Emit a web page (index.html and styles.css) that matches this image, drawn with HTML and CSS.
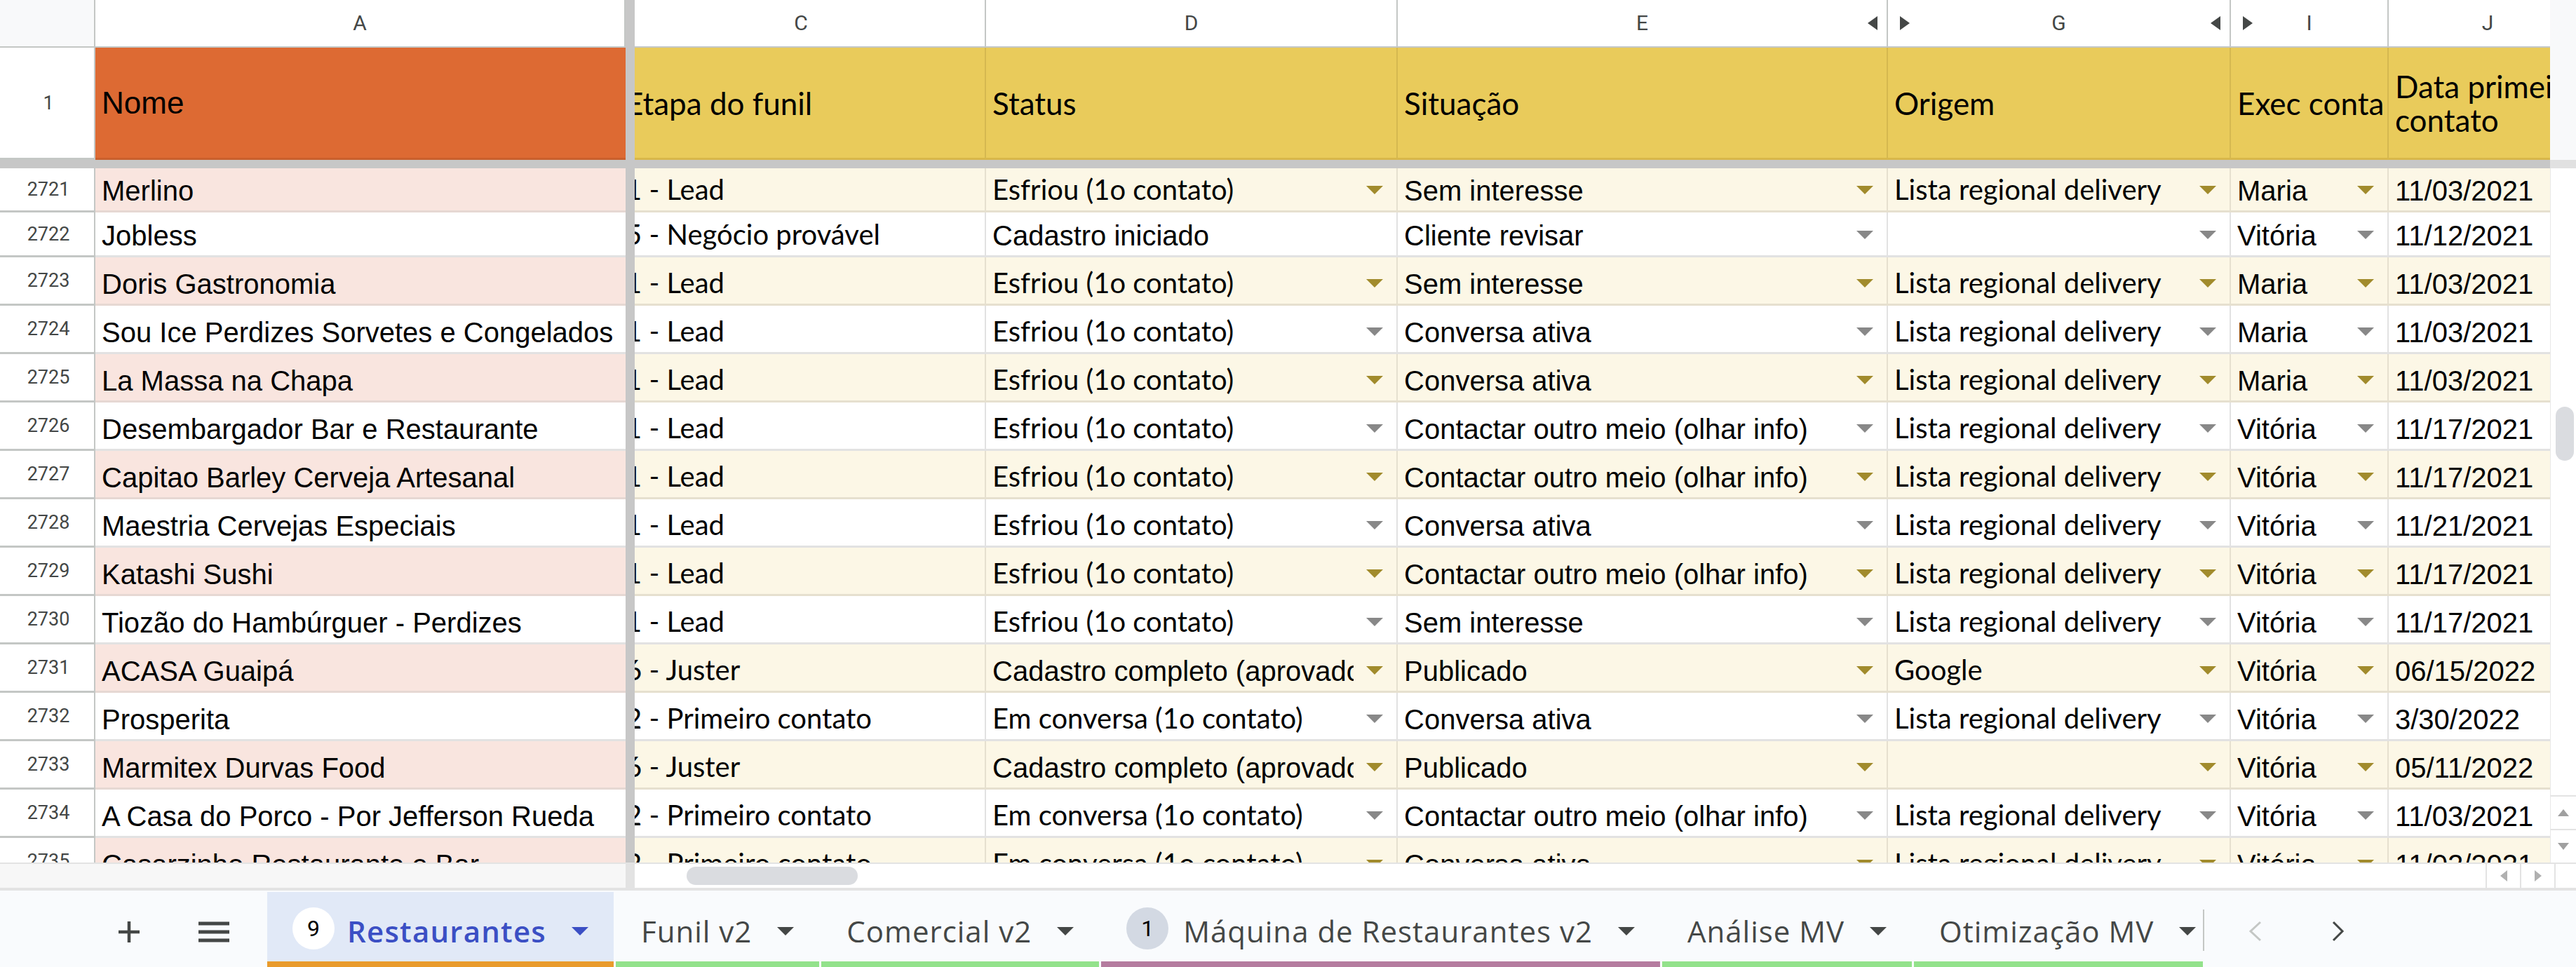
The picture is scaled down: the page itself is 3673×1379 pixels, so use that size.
FILE: index.html
```html
<!DOCTYPE html>
<html lang="pt">
<head>
<meta charset="utf-8">
<title>Restaurantes</title>
<link rel="stylesheet" href="styles.css">
</head>
<body>
<div class="app">
  <div class="main">
    <div class="table">
      <div class="grid">
        <div class="corner"></div>
        <div class="ch">A</div>
        <div class="fz"></div>
        <div class="ch cc-l"><span>C</span></div>
        <div class="ch">D</div>
        <div class="ch">E<i class="hl"></i></div>
        <div class="ch"><i class="hr"></i>G<i class="hl"></i></div>
        <div class="ch"><i class="hr"></i>I</div>
        <div class="ch">J</div>

        <div class="rn">1</div>
        <div class="hd or">Nome</div>
        <div class="fz"></div>
        <div class="hd ye cc"><span class="t">Etapa do funil</span></div>
        <div class="hd ye">Status</div>
        <div class="hd ye">Situação</div>
        <div class="hd ye">Origem</div>
        <div class="hd ye">Exec conta</div>
        <div class="hd ye wrap">Data primeiro contato</div>

        <div class="fzh"></div>

        <div class="row odd">
          <div class="rn">2721</div>
          <div class="c a"><span class="t">Merlino</span></div>
          <div class="fz"></div>
          <div class="c cc"><span class="t l">1 - Lead</span></div>
          <div class="c"><span class="t l">Esfriou (1o contato)</span><i class="dd"></i></div>
          <div class="c"><span class="t">Sem interesse</span><i class="dd"></i></div>
          <div class="c"><span class="t l">Lista regional delivery</span><i class="dd"></i></div>
          <div class="c"><span class="t">Maria</span><i class="dd"></i></div>
          <div class="c"><span class="t">11/03/2021</span></div>
        </div>
        <div class="row even">
          <div class="rn">2722</div>
          <div class="c a"><span class="t">Jobless</span></div>
          <div class="fz"></div>
          <div class="c cc"><span class="t l">5 - Negócio provável</span></div>
          <div class="c"><span class="t">Cadastro iniciado</span></div>
          <div class="c"><span class="t">Cliente revisar</span><i class="dd"></i></div>
          <div class="c"><span class="t l"></span><i class="dd"></i></div>
          <div class="c"><span class="t">Vitória</span><i class="dd"></i></div>
          <div class="c"><span class="t">11/12/2021</span></div>
        </div>
        <div class="row odd">
          <div class="rn">2723</div>
          <div class="c a"><span class="t">Doris Gastronomia</span></div>
          <div class="fz"></div>
          <div class="c cc"><span class="t l">1 - Lead</span></div>
          <div class="c"><span class="t l">Esfriou (1o contato)</span><i class="dd"></i></div>
          <div class="c"><span class="t">Sem interesse</span><i class="dd"></i></div>
          <div class="c"><span class="t l">Lista regional delivery</span><i class="dd"></i></div>
          <div class="c"><span class="t">Maria</span><i class="dd"></i></div>
          <div class="c"><span class="t">11/03/2021</span></div>
        </div>
        <div class="row even">
          <div class="rn">2724</div>
          <div class="c a"><span class="t">Sou Ice Perdizes Sorvetes e Congelados</span></div>
          <div class="fz"></div>
          <div class="c cc"><span class="t l">1 - Lead</span></div>
          <div class="c"><span class="t l">Esfriou (1o contato)</span><i class="dd"></i></div>
          <div class="c"><span class="t">Conversa ativa</span><i class="dd"></i></div>
          <div class="c"><span class="t l">Lista regional delivery</span><i class="dd"></i></div>
          <div class="c"><span class="t">Maria</span><i class="dd"></i></div>
          <div class="c"><span class="t">11/03/2021</span></div>
        </div>
        <div class="row odd">
          <div class="rn">2725</div>
          <div class="c a"><span class="t">La Massa na Chapa</span></div>
          <div class="fz"></div>
          <div class="c cc"><span class="t l">1 - Lead</span></div>
          <div class="c"><span class="t l">Esfriou (1o contato)</span><i class="dd"></i></div>
          <div class="c"><span class="t">Conversa ativa</span><i class="dd"></i></div>
          <div class="c"><span class="t l">Lista regional delivery</span><i class="dd"></i></div>
          <div class="c"><span class="t">Maria</span><i class="dd"></i></div>
          <div class="c"><span class="t">11/03/2021</span></div>
        </div>
        <div class="row even">
          <div class="rn">2726</div>
          <div class="c a"><span class="t">Desembargador Bar e Restaurante</span></div>
          <div class="fz"></div>
          <div class="c cc"><span class="t l">1 - Lead</span></div>
          <div class="c"><span class="t l">Esfriou (1o contato)</span><i class="dd"></i></div>
          <div class="c"><span class="t">Contactar outro meio (olhar info)</span><i class="dd"></i></div>
          <div class="c"><span class="t l">Lista regional delivery</span><i class="dd"></i></div>
          <div class="c"><span class="t">Vitória</span><i class="dd"></i></div>
          <div class="c"><span class="t">11/17/2021</span></div>
        </div>
        <div class="row odd">
          <div class="rn">2727</div>
          <div class="c a"><span class="t">Capitao Barley Cerveja Artesanal</span></div>
          <div class="fz"></div>
          <div class="c cc"><span class="t l">1 - Lead</span></div>
          <div class="c"><span class="t l">Esfriou (1o contato)</span><i class="dd"></i></div>
          <div class="c"><span class="t">Contactar outro meio (olhar info)</span><i class="dd"></i></div>
          <div class="c"><span class="t l">Lista regional delivery</span><i class="dd"></i></div>
          <div class="c"><span class="t">Vitória</span><i class="dd"></i></div>
          <div class="c"><span class="t">11/17/2021</span></div>
        </div>
        <div class="row even">
          <div class="rn">2728</div>
          <div class="c a"><span class="t">Maestria Cervejas Especiais</span></div>
          <div class="fz"></div>
          <div class="c cc"><span class="t l">1 - Lead</span></div>
          <div class="c"><span class="t l">Esfriou (1o contato)</span><i class="dd"></i></div>
          <div class="c"><span class="t">Conversa ativa</span><i class="dd"></i></div>
          <div class="c"><span class="t l">Lista regional delivery</span><i class="dd"></i></div>
          <div class="c"><span class="t">Vitória</span><i class="dd"></i></div>
          <div class="c"><span class="t">11/21/2021</span></div>
        </div>
        <div class="row odd">
          <div class="rn">2729</div>
          <div class="c a"><span class="t">Katashi Sushi</span></div>
          <div class="fz"></div>
          <div class="c cc"><span class="t l">1 - Lead</span></div>
          <div class="c"><span class="t l">Esfriou (1o contato)</span><i class="dd"></i></div>
          <div class="c"><span class="t">Contactar outro meio (olhar info)</span><i class="dd"></i></div>
          <div class="c"><span class="t l">Lista regional delivery</span><i class="dd"></i></div>
          <div class="c"><span class="t">Vitória</span><i class="dd"></i></div>
          <div class="c"><span class="t">11/17/2021</span></div>
        </div>
        <div class="row even">
          <div class="rn">2730</div>
          <div class="c a"><span class="t">Tiozão do Hambúrguer - Perdizes</span></div>
          <div class="fz"></div>
          <div class="c cc"><span class="t l">1 - Lead</span></div>
          <div class="c"><span class="t l">Esfriou (1o contato)</span><i class="dd"></i></div>
          <div class="c"><span class="t">Sem interesse</span><i class="dd"></i></div>
          <div class="c"><span class="t l">Lista regional delivery</span><i class="dd"></i></div>
          <div class="c"><span class="t">Vitória</span><i class="dd"></i></div>
          <div class="c"><span class="t">11/17/2021</span></div>
        </div>
        <div class="row odd">
          <div class="rn">2731</div>
          <div class="c a"><span class="t">ACASA Guaipá</span></div>
          <div class="fz"></div>
          <div class="c cc"><span class="t l">6 - Juster</span></div>
          <div class="c"><span class="t">Cadastro completo (aprovado)</span><i class="dd"></i></div>
          <div class="c"><span class="t">Publicado</span><i class="dd"></i></div>
          <div class="c"><span class="t l">Google</span><i class="dd"></i></div>
          <div class="c"><span class="t">Vitória</span><i class="dd"></i></div>
          <div class="c"><span class="t">06/15/2022</span></div>
        </div>
        <div class="row even">
          <div class="rn">2732</div>
          <div class="c a"><span class="t">Prosperita</span></div>
          <div class="fz"></div>
          <div class="c cc"><span class="t l">2 - Primeiro contato</span></div>
          <div class="c"><span class="t l">Em conversa (1o contato)</span><i class="dd"></i></div>
          <div class="c"><span class="t">Conversa ativa</span><i class="dd"></i></div>
          <div class="c"><span class="t l">Lista regional delivery</span><i class="dd"></i></div>
          <div class="c"><span class="t">Vitória</span><i class="dd"></i></div>
          <div class="c"><span class="t">3/30/2022</span></div>
        </div>
        <div class="row odd">
          <div class="rn">2733</div>
          <div class="c a"><span class="t">Marmitex Durvas Food</span></div>
          <div class="fz"></div>
          <div class="c cc"><span class="t l">6 - Juster</span></div>
          <div class="c"><span class="t">Cadastro completo (aprovado)</span><i class="dd"></i></div>
          <div class="c"><span class="t">Publicado</span><i class="dd"></i></div>
          <div class="c"><span class="t l"></span><i class="dd"></i></div>
          <div class="c"><span class="t">Vitória</span><i class="dd"></i></div>
          <div class="c"><span class="t">05/11/2022</span></div>
        </div>
        <div class="row even">
          <div class="rn">2734</div>
          <div class="c a"><span class="t">A Casa do Porco - Por Jefferson Rueda</span></div>
          <div class="fz"></div>
          <div class="c cc"><span class="t l">2 - Primeiro contato</span></div>
          <div class="c"><span class="t l">Em conversa (1o contato)</span><i class="dd"></i></div>
          <div class="c"><span class="t">Contactar outro meio (olhar info)</span><i class="dd"></i></div>
          <div class="c"><span class="t l">Lista regional delivery</span><i class="dd"></i></div>
          <div class="c"><span class="t">Vitória</span><i class="dd"></i></div>
          <div class="c"><span class="t">11/03/2021</span></div>
        </div>
        <div class="row odd">
          <div class="rn">2735</div>
          <div class="c a"><span class="t">Casarzinho Restaurante e Bar</span></div>
          <div class="fz"></div>
          <div class="c cc"><span class="t l">2 - Primeiro contato</span></div>
          <div class="c"><span class="t l">Em conversa (1o contato)</span><i class="dd"></i></div>
          <div class="c"><span class="t">Conversa ativa</span><i class="dd"></i></div>
          <div class="c"><span class="t l">Lista regional delivery</span><i class="dd"></i></div>
          <div class="c"><span class="t">Vitória</span><i class="dd"></i></div>
          <div class="c"><span class="t">11/02/2021</span></div>
        </div>
      </div>
    </div>
    <div class="vscroll">
      <div class="vs-top"></div>
      <div class="vs-fz"></div>
      <div class="vs-track"><div class="vs-thumb"></div></div>
      <div class="vs-btn"><i class="up"></i></div>
      <div class="vs-btn"><i class="down"></i></div>
    </div>
  </div>

  <div class="hscroll">
    <div class="hs-frozen"></div>
    <div class="hs-div"></div>
    <div class="hs-track"><div class="hs-thumb"></div></div>
    <div class="hs-btn"><i class="left"></i></div>
    <div class="hs-btn"><i class="right"></i></div>
    <div class="hs-corner"></div>
  </div>

  <div class="tabbar">
    <div class="tb-left">
      <svg class="ico-plus" width="32" height="32" viewBox="0 0 32 32"><path d="M16 1v30M1 16h30" stroke="#444746" stroke-width="4.5" fill="none"/></svg>
      <svg class="ico-menu" width="44" height="30" viewBox="0 0 44 30"><path d="M0 3h44M0 15h44M0 27h44" stroke="#444746" stroke-width="5" fill="none"/></svg>
    </div>
    <div class="tabs">
      <div class="tab on bar-orange"><span class="badge">9</span><span class="tname">Restaurantes</span><i class="tarr"></i></div>
      <div class="tab bar-green"><span class="tname">Funil v2</span><i class="tarr"></i></div>
      <div class="tab bar-green"><span class="tname">Comercial v2</span><i class="tarr"></i></div>
      <div class="tab bar-purple"><span class="badge gray">1</span><span class="tname">Máquina de Restaurantes v2</span><i class="tarr"></i></div>
      <div class="tab bar-green"><span class="tname">Análise MV</span><i class="tarr"></i></div>
      <div class="tab bar-green"><span class="tname">Otimização MV</span><i class="tarr"></i></div>
    </div>
    <div class="tb-sep"></div>
    <div class="tb-nav">
      <svg class="nav-prev" width="22" height="30" viewBox="0 0 22 30"><path d="M19 2 L5 15 L19 28" stroke="#c4c7c5" stroke-width="3" fill="none"/></svg>
      <svg class="nav-next" width="18" height="30" viewBox="0 0 18 30"><path d="M2 2 L15 15 L2 28" stroke="#444746" stroke-width="3" fill="none"/></svg>
    </div>
  </div>
</div>
</body>
</html>
```

FILE: styles.css
```css
* { box-sizing: border-box; margin: 0; padding: 0; }

html, body {
  width: 3673px;
  height: 1379px;
  overflow: hidden;
  background: #ffffff;
  font-family: "Liberation Sans", Arial, sans-serif;
  color: #000;
}

.app { display: flex; flex-direction: column; width: 3673px; height: 1379px; }

.main { display: flex; height: 1230px; }

.table { width: 3636px; height: 1230px; overflow: hidden; flex: none; }

.grid {
  display: grid;
  grid-template-columns: 136px 756px 13px 501px 587px 699px 489px 225px 284px;
  grid-template-rows: 68px 160px 12px 63px 64px repeat(13, 69px);
  width: 3690px;
}

.row { display: contents; }

.corner {
  background: #f8f9fa;
  border-right: 2px solid #c4c7c5;
  border-bottom: 2px solid #c4c7c5;
}
.ch {
  position: relative;
  display: flex;
  align-items: center;
  justify-content: center;
  background: #fff;
  border-right: 2px solid #c4c7c5;
  border-bottom: 2px solid #c4c7c5;
  font-family: Roboto, "Liberation Sans", sans-serif;
  font-size: 30px;
  color: #444746;
  padding-bottom: 2px;
}
.cc-l span { margin-right: 25px; }
.hl {
  position: absolute;
  right: 13px;
  top: 23px;
  width: 0; height: 0;
  border-top: 10px solid transparent;
  border-bottom: 10px solid transparent;
  border-right: 14px solid #444746;
}
.hr {
  position: absolute;
  left: 17px;
  top: 23px;
  width: 0; height: 0;
  border-top: 10px solid transparent;
  border-bottom: 10px solid transparent;
  border-left: 14px solid #444746;
}

.fz { background: #c7c7c7; }
.fzh { grid-column: 1 / -1; background: #c7c7c7; }

.rn {
  display: flex;
  align-items: center;
  justify-content: center;
  background: #fff;
  border-right: 2px solid #c4c7c5;
  border-bottom: 3px solid #c4c7c5;
  font-family: Roboto, "Liberation Sans", sans-serif;
  font-size: 27px;
  color: #444746;
  padding-left: 4px;
}

.hd {
  display: flex;
  align-items: center;
  padding-left: 9px;
  font-size: 44px;
  line-height: 48px;
  white-space: nowrap;
  overflow: hidden;
  border-bottom: 3px solid;
}
.hd.or {
  background: #dd6a33;
  border-bottom-color: #c9602d;
  font-family: "Liberation Sans", Arial, sans-serif;
}
.hd.ye {
  background: #e9cb5b;
  border-bottom-color: #d8b74b;
  border-right: 2px solid #d5b850;
  font-family: Lato, "Liberation Sans", sans-serif;
}
.hd.wrap { white-space: normal; }
.hd.cc { padding-left: 0; }
.hd.cc .t { margin-left: -13px; }

.c {
  display: flex;
  align-items: flex-end;
  overflow: hidden;
  white-space: nowrap;
  padding: 0 0 5px 9px;
  font-size: 40px;
  line-height: 46px;
  border-right: 2px solid #e2e2e2;
  border-bottom: 3px solid #e2e2e2;
  background: #fff;
}
.c .t { flex: 1 1 auto; min-width: 0; overflow: hidden; display: block; }
.c .t.l { font-family: Lato, "Liberation Sans", sans-serif; padding-bottom: 2px; }
.c.cc { padding-left: 0; }
.c.cc .t { margin-left: -13px; }
.c.a { border-right: none; }

.dd {
  flex: none;
  width: 0; height: 0;
  border-left: 12px solid transparent;
  border-right: 12px solid transparent;
  border-top: 12px solid #888888;
  margin: 0 19px 18px 18px;
}

.odd .c { background: #fcf7e6; border-color: #e6e0cf; }
.odd .c.a { background: #f9e5df; border-bottom-color: #e6d8d3; }
.odd .dd { border-top-color: #a18b2c; }
.even .c { background: #ffffff; border-color: #e2e2e2; }

.vscroll { width: 37px; height: 1230px; display: flex; flex-direction: column; flex: none; background: #fff; }
.vs-top { height: 228px; background: #f8f9fa; }
.vs-fz { height: 12px; background: #e1e1e1; }
.vs-track { height: 894px; padding: 340px 4px 0 7px; border-left: 1px solid #e8e8e8; }
.vs-thumb { width: 26px; height: 77px; border-radius: 13px; background: #dadce0; }
.vs-btn {
  height: 48px;
  display: flex;
  align-items: center;
  justify-content: center;
  border-top: 2px solid #e3e3e3;
  border-left: 1px solid #e8e8e8;
}
.vs-btn .up { width: 0; height: 0; border-left: 8px solid transparent; border-right: 8px solid transparent; border-bottom: 10px solid #a0a0a0; }
.vs-btn .down { width: 0; height: 0; border-left: 8px solid transparent; border-right: 8px solid transparent; border-top: 10px solid #a0a0a0; }

.hscroll { display: flex; height: 36px; border-top: 2px solid #e3e3e3; }
.hs-frozen { width: 892px; background: #f7f7f7; }
.hs-div { width: 13px; background: #e3e3e3; }
.hs-track { width: 2639px; background: #fff; padding: 4px 0 0 74px; }
.hs-thumb { width: 244px; height: 26px; border-radius: 13px; background: #dadce0; }
.hs-btn { width: 49px; display: flex; align-items: center; justify-content: center; border-left: 2px solid #e3e3e3; background: #fff; }
.hs-btn .left { width: 0; height: 0; border-top: 8px solid transparent; border-bottom: 8px solid transparent; border-right: 10px solid #b0b0b0; }
.hs-btn .right { width: 0; height: 0; border-top: 8px solid transparent; border-bottom: 8px solid transparent; border-left: 10px solid #b0b0b0; }
.hs-corner { width: 31px; border-left: 2px solid #e3e3e3; background: #fff; }

.tabbar {
  display: flex;
  height: 113px;
  border-top: 4px solid #e3e3e3;
  background: #f9fbfd;
}
.tb-left {
  width: 381px;
  flex: none;
  display: flex;
  align-items: center;
  padding: 8px 0 0 168px;
  gap: 83px;
}
.tabs {
  display: flex;
  gap: 3px;
  width: 2760px;
  flex: none;
  overflow: hidden;
  padding-top: 2px;
}
.tab {
  flex: none;
  display: flex;
  align-items: center;
  padding: 12px 36px 0 36px;
  border-bottom: 8px solid #93e28b;
  font-family: "Open Sans", Roboto, sans-serif;
  font-size: 42px;
  font-weight: 500;
  letter-spacing: 1px;
  color: #444746;
  white-space: nowrap;
}
.tab.on { background: #e1e9f7; color: #3b4fc4; font-weight: 600; letter-spacing: 1.2px; }
.bar-orange { border-bottom-color: #e99b2c; }
.bar-green { border-bottom-color: #93e28b; }
.bar-purple { border-bottom-color: #b57c9f; }
.badge {
  width: 60px;
  height: 60px;
  border-radius: 50%;
  background: #ffffff;
  display: flex;
  align-items: center;
  justify-content: center;
  font-family: Roboto, sans-serif;
  font-size: 32px;
  font-weight: 400;
  letter-spacing: 0;
  color: #000;
  margin: 0 18px 7px 0;
}
.badge.gray { background: #d3d9e3; margin-right: 21px; }
.tarr {
  width: 0; height: 0;
  border-left: 12px solid transparent;
  border-right: 12px solid transparent;
  border-top: 12px solid #444746;
  margin-left: 36px;
}
.tab.on .tarr { border-top-color: #3b4fc4; }
.tb-sep { width: 2px; height: 59px; background: #c4c7c5; align-self: center; margin-top: 4px; flex: none; }
.tb-nav { display: flex; align-items: center; padding: 6px 0 0 61px; gap: 99px; }
```
